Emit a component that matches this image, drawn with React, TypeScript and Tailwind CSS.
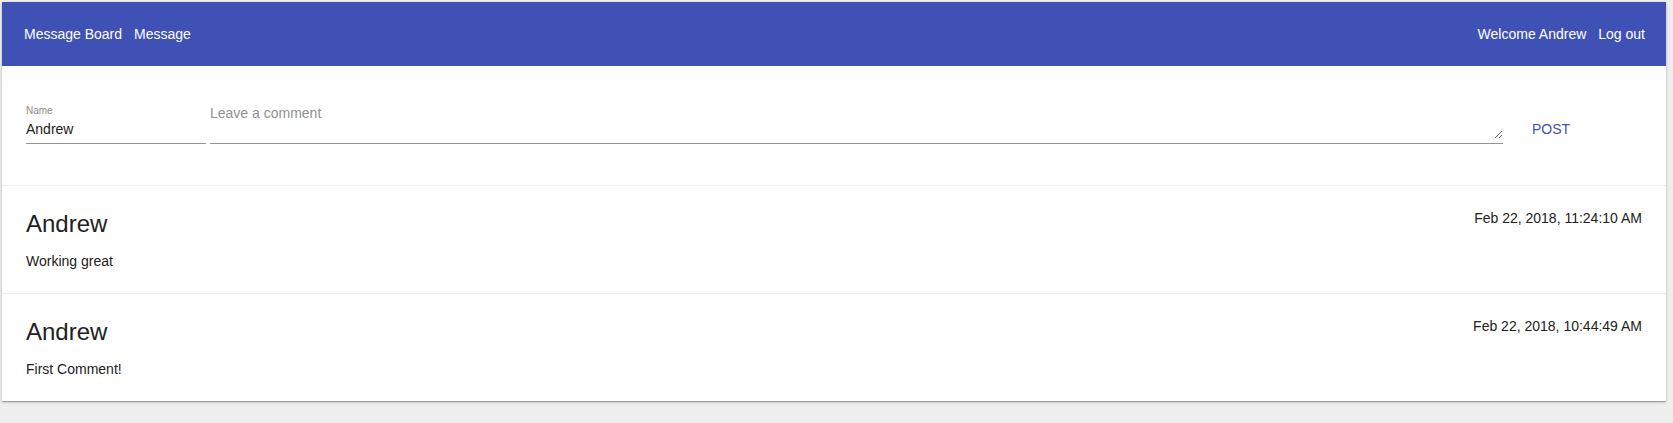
import { useState } from 'react'

interface Comment {
  id: number
  name: string
  text: string
  date: string
}

const comments: Comment[] = [
  { id: 2, name: 'Andrew', text: 'Working great', date: 'Feb 22, 2018, 11:24:10 AM' },
  { id: 1, name: 'Andrew', text: 'First Comment!', date: 'Feb 22, 2018, 10:44:49 AM' },
]

export default function App() {
  const [name, setName] = useState('Andrew')
  const [comment, setComment] = useState('')

  return (
    <div className="min-h-screen bg-[#eeeeee] pt-[2px] pl-[2px] font-['Liberation_Sans',Arial,sans-serif]">
      <div className="w-[1664px] bg-white shadow-[0_1px_3px_rgba(0,0,0,0.2),0_1px_1px_rgba(0,0,0,0.14),0_2px_1px_-1px_rgba(0,0,0,0.12)]">
        {/* App bar */}
        <header className="h-[64px] bg-[#3f51b5] flex items-center justify-between pl-[22px] pr-[21px] text-white text-[14px]">
          <nav className="flex gap-3">
            <a href="#">Message Board</a>
            <a href="#">Message</a>
          </nav>
          <div className="flex gap-3">
            <span>Welcome Andrew</span>
            <a href="#">Log out</a>
          </div>
        </header>

        {/* New comment form */}
        <div className="flex items-end pl-[24px] pr-[71px] pt-[37px] pb-[41px]">
          <label className="w-[180px] flex flex-col border-b border-[#949494] pb-[4px]">
            <span className="text-[10px] leading-[12px] text-[#8a8a8a]">Name</span>
            <input
              value={name}
              onChange={e => setName(e.target.value)}
              className="mt-[2px] text-[14px] leading-[20px] h-[20px] text-[#212121] outline-none bg-transparent"
            />
          </label>
          <div className="flex-1 ml-[4px] border-b border-[#949494] pb-[4px] flex">
            <textarea
              value={comment}
              onChange={e => setComment(e.target.value)}
              placeholder="Leave a comment"
              className="w-full h-[36px] text-[14px] leading-[20px] text-[#212121] placeholder:text-[#919191] outline-none bg-transparent p-0 block"
            />
          </div>
          <button className="w-[88px] h-[30px] ml-[4px] flex items-center justify-center text-[14px] text-[#3f51b5] uppercase">
            Post
          </button>
        </div>

        {/* Comments */}
        {comments.map(c => (
          <div key={c.id} className="border-t border-[#eeeeee] px-[24px] pt-[22px] pb-[22px]">
            <div className="flex items-start justify-between">
              <h2 className="text-[24px] leading-[32px] text-[#212121]">{c.name}</h2>
              <span className="text-[14px] leading-[20px] text-[#212121]">{c.date}</span>
            </div>
            <p className="mt-[11px] text-[14px] leading-[20px] text-[#212121]">{c.text}</p>
          </div>
        ))}
      </div>
    </div>
  )
}
